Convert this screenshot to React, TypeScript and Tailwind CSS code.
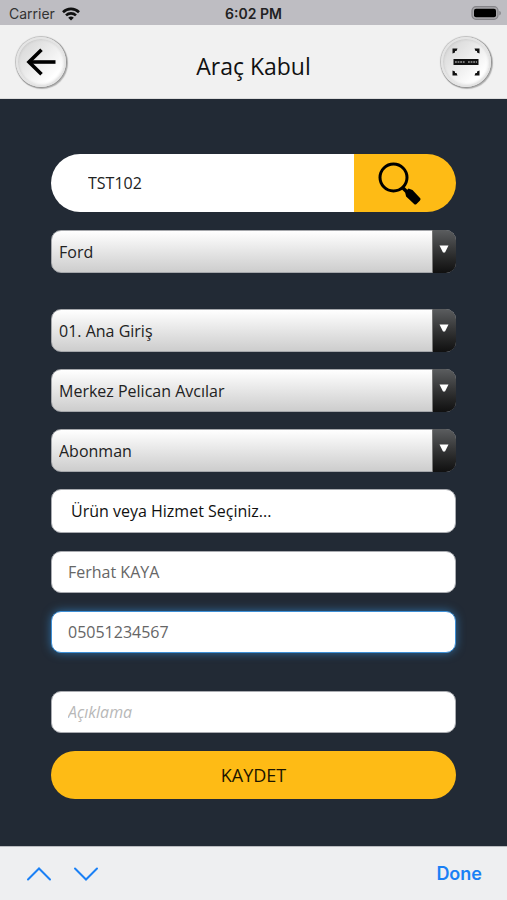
import React, { useState } from "react";

const ROUND_BUTTON =
  "flex size-[50px] shrink-0 items-center justify-center rounded-full border-2 border-[#e4e4e4] bg-linear-to-br from-[#d2d2d2] to-white to-80% shadow-[0_0_1px_1px_rgba(0,0,0,0.2),1px_1px_1px_1px_rgba(0,0,0,0.25),inset_0_0_3px_rgba(0,0,0,0.15)]";

const FIELD =
  "block w-full rounded-[10px] border border-[#a9abb0] bg-white px-4 text-base text-[#666] outline-none placeholder:italic placeholder:text-[#b8b8b8]";

type GradientSelectProps = { id: string; label: string; options: string[] };

function GradientSelect({ id, label, options }: GradientSelectProps) {
  return (
    <div className="relative">
      <label htmlFor={id} className="sr-only">
        {label}
      </label>
      <select
        id={id}
        className="block h-[43px] w-full appearance-none rounded-[10px] border border-[#a5a7ab] bg-linear-to-b from-white to-[#cdcdcd] pr-8 pl-[7px] text-base text-[#222] outline-none"
      >
        {options.map((option) => (
          <option key={option}>{option}</option>
        ))}
      </select>
      <span className="pointer-events-none absolute inset-y-0 right-0 flex w-6 items-center justify-center rounded-r-[10px] border-l border-[#777] bg-linear-to-b from-[#5b5d5f] to-[#101010] pr-px pb-[5px]">
        <svg width="10" height="8" viewBox="0 0 10 8" aria-hidden="true">
          <path d="M.5.5h9L6 7.500H4z" fill="#fff" />
        </svg>
      </span>
    </div>
  );
}

function StatusBar() {
  return (
    <div className="grid h-[25px] grid-cols-3 items-center bg-[#bebdc2] px-[9px] font-['Inter','Liberation_Sans',sans-serif] text-sm text-[#333]">
      <div className="flex items-center gap-[7px] pt-[2px]">
        <span className="leading-5">Carrier</span>
        <svg width="18" height="14" viewBox="0 0 18 14" fill="none" stroke="#111" strokeWidth="2.6" aria-hidden="true">
          <path d="M1 5.2a11.4 11.4 0 0 1 16 0" />
          <path d="M4 8.4a7.2 7.2 0 0 1 10 0" />
          <path d="M9 13.6 6.2 10.8a4 4 0 0 1 5.6 0z" fill="#111" stroke="none" />
        </svg>
      </div>
      <span className="pt-[2px] text-center leading-5 font-semibold text-[#222]">6:02 PM</span>
      <svg className="-mr-1 justify-self-end" width="31" height="14" viewBox="0 0 31 14" aria-hidden="true">
        <rect x="1" y=".7" width="26" height="12.6" rx="4" fill="#aaa9ad" stroke="#858489" strokeWidth="1.2" />
        <rect x="3" y="2.7" width="22" height="8.6" rx="2" fill="#000" />
        <path d="M28.3 5v4.400c1-.4 1.600-1.200 1.600-2.200S29.300 5.400 28.300 5z" fill="#858489" />
      </svg>
    </div>
  );
}

function Header() {
  return (
    <header className="flex h-[74px] items-center justify-between border-b border-[#dcdcdc] bg-[#f1f1f1] px-4 pt-px">
      <button type="button" aria-label="Geri" className={ROUND_BUTTON}>
        <svg width="30" height="28" viewBox="0 0 30 28" fill="none" stroke="#000" strokeWidth="3.6" aria-hidden="true">
          <path d="M29.500 14H3" />
          <path d="M15.500 1.800 3 14l12.500 12.200" />
        </svg>
      </button>
      <h1 className="pt-[7px] text-[23px] leading-8 text-[#111]">Araç Kabul</h1>
      <button type="button" aria-label="Barkod okut" className={ROUND_BUTTON}>
        <svg width="28" height="28" viewBox="0 0 28 28" aria-hidden="true">
          <g fill="#111">
            <path d="M.5.5h5L4.500 3H3v1.500L.5 5.500z" />
            <path d="M27.500.5h-5L23.500 3H25v1.500l2.500 1z" />
            <path d="M.5 27.500h5L4.500 25H3v-1.500l-2.500-1z" />
            <path d="M27.500 27.500h-5l1-2.500H25v-1.500l2.500-1z" />
            <rect x="1.500" y="11" width="25" height="6" />
          </g>
          <path d="M3 14h10M16 14h9" stroke="#777" strokeWidth="2" strokeDasharray="1.800 .8" />
        </svg>
      </button>
    </header>
  );
}

export default function App() {
  const [plate, setPlate] = useState("TST102");
  const [name, setName] = useState("Ferhat KAYA");
  const [phone, setPhone] = useState("05051234567");
  const [note, setNote] = useState("");

  return (
    <div className="flex min-h-screen flex-col bg-[#222a35] font-['Open_Sans','Noto_Sans',sans-serif]">
      <StatusBar />
      <Header />
      <main className="flex-1 px-[51px] pt-[55px] pb-[46px]">
        <form className="flex flex-col" onSubmit={(e) => e.preventDefault()}>
          <div className="flex h-[58px] overflow-hidden rounded-full">
            <label htmlFor="plate" className="sr-only">
              Plaka
            </label>
            <input
              id="plate"
              value={plate}
              onChange={(e) => setPlate(e.target.value)}
              className="min-w-0 flex-1 bg-white px-[37px] text-base text-[#222] outline-none"
            />
            <button type="button" aria-label="Ara" className="flex w-[102px] items-center justify-center bg-[#febb15] pr-3">
              <svg width="44" height="44" viewBox="0 0 44 44" aria-hidden="true">
                <circle cx="16.500" cy="16.500" r="13.500" fill="none" stroke="#000" strokeWidth="3" />
                <path d="m25.500 26.500 4 4" stroke="#000" strokeWidth="3.500" />
                <path d="M28 31 31.500 27.500l4 1.500 7.500 8c.7.800.7 1.700 0 2.400L39.500 43c-.8.700-1.700.700-2.400 0l-8-7.500z" />
              </svg>
            </button>
          </div>

          <div className="mt-[18px]">
            <GradientSelect id="brand" label="Marka" options={["Ford"]} />
          </div>

          <div className="mt-9 flex flex-col gap-[17px]">
            <GradientSelect id="gate" label="Giriş" options={["01. Ana Giriş"]} />
            <GradientSelect id="branch" label="Şube" options={["Merkez Pelican Avcılar"]} />
            <GradientSelect id="plan" label="Müşteri tipi" options={["Abonman"]} />
          </div>

          <div className="mt-[17px] flex flex-col gap-[18px]">
            <div>
              <label htmlFor="service" className="sr-only">
                Ürün veya hizmet
              </label>
              <select
                id="service"
                className="block h-11 w-full appearance-none rounded-[10px] border border-[#a9abb0] bg-white px-[19px] text-base text-[#111] outline-none"
              >
                <option>Ürün veya Hizmet Seçiniz...</option>
              </select>
            </div>
            <div>
              <label htmlFor="name" className="sr-only">
                Ad soyad
              </label>
              <input id="name" value={name} onChange={(e) => setName(e.target.value)} className={`${FIELD} h-[42px]`} />
            </div>
            <div>
              <label htmlFor="phone" className="sr-only">
                Telefon
              </label>
              <input
                id="phone"
                type="tel"
                value={phone}
                onChange={(e) => setPhone(e.target.value)}
                className="block h-[42px] w-full rounded-[10px] border border-[#3d8fd6] bg-white px-4 text-base text-[#666] shadow-[0_0_10px_rgba(51,136,204,0.7)] outline-none"
              />
            </div>
          </div>

          <div className="mt-[38px]">
            <label htmlFor="note" className="sr-only">
              Açıklama
            </label>
            <input
              id="note"
              placeholder="Açıklama"
              value={note}
              onChange={(e) => setNote(e.target.value)}
              className={`${FIELD} h-[42px]`}
            />
          </div>

          <button type="submit" className="mt-[18px] h-[48px] rounded-full bg-[#febb15] text-lg text-[#1c1500]">
            KAYDET
          </button>
        </form>
      </main>
      <footer className="flex h-[54px] items-center justify-between border-t border-[#b9bbbf] bg-[#eeeff1] px-[25px] font-['Inter','Liberation_Sans',sans-serif] text-[#1a80f5]">
        <div className="flex gap-[19px]">
          <button type="button" aria-label="Önceki alan">
            <svg width="28" height="16" viewBox="0 0 28 16" fill="none" stroke="currentColor" strokeWidth="2" strokeLinecap="round" aria-hidden="true">
              <path d="M3 13.500 14 2.500l11 11" />
            </svg>
          </button>
          <button type="button" aria-label="Sonraki alan">
            <svg width="28" height="16" viewBox="0 0 28 16" fill="none" stroke="currentColor" strokeWidth="2" strokeLinecap="round" aria-hidden="true">
              <path d="M3 2.500l11 11 11-11" />
            </svg>
          </button>
        </div>
        <button type="button" className="text-lg font-semibold">
          Done
        </button>
      </footer>
    </div>
  );
}
